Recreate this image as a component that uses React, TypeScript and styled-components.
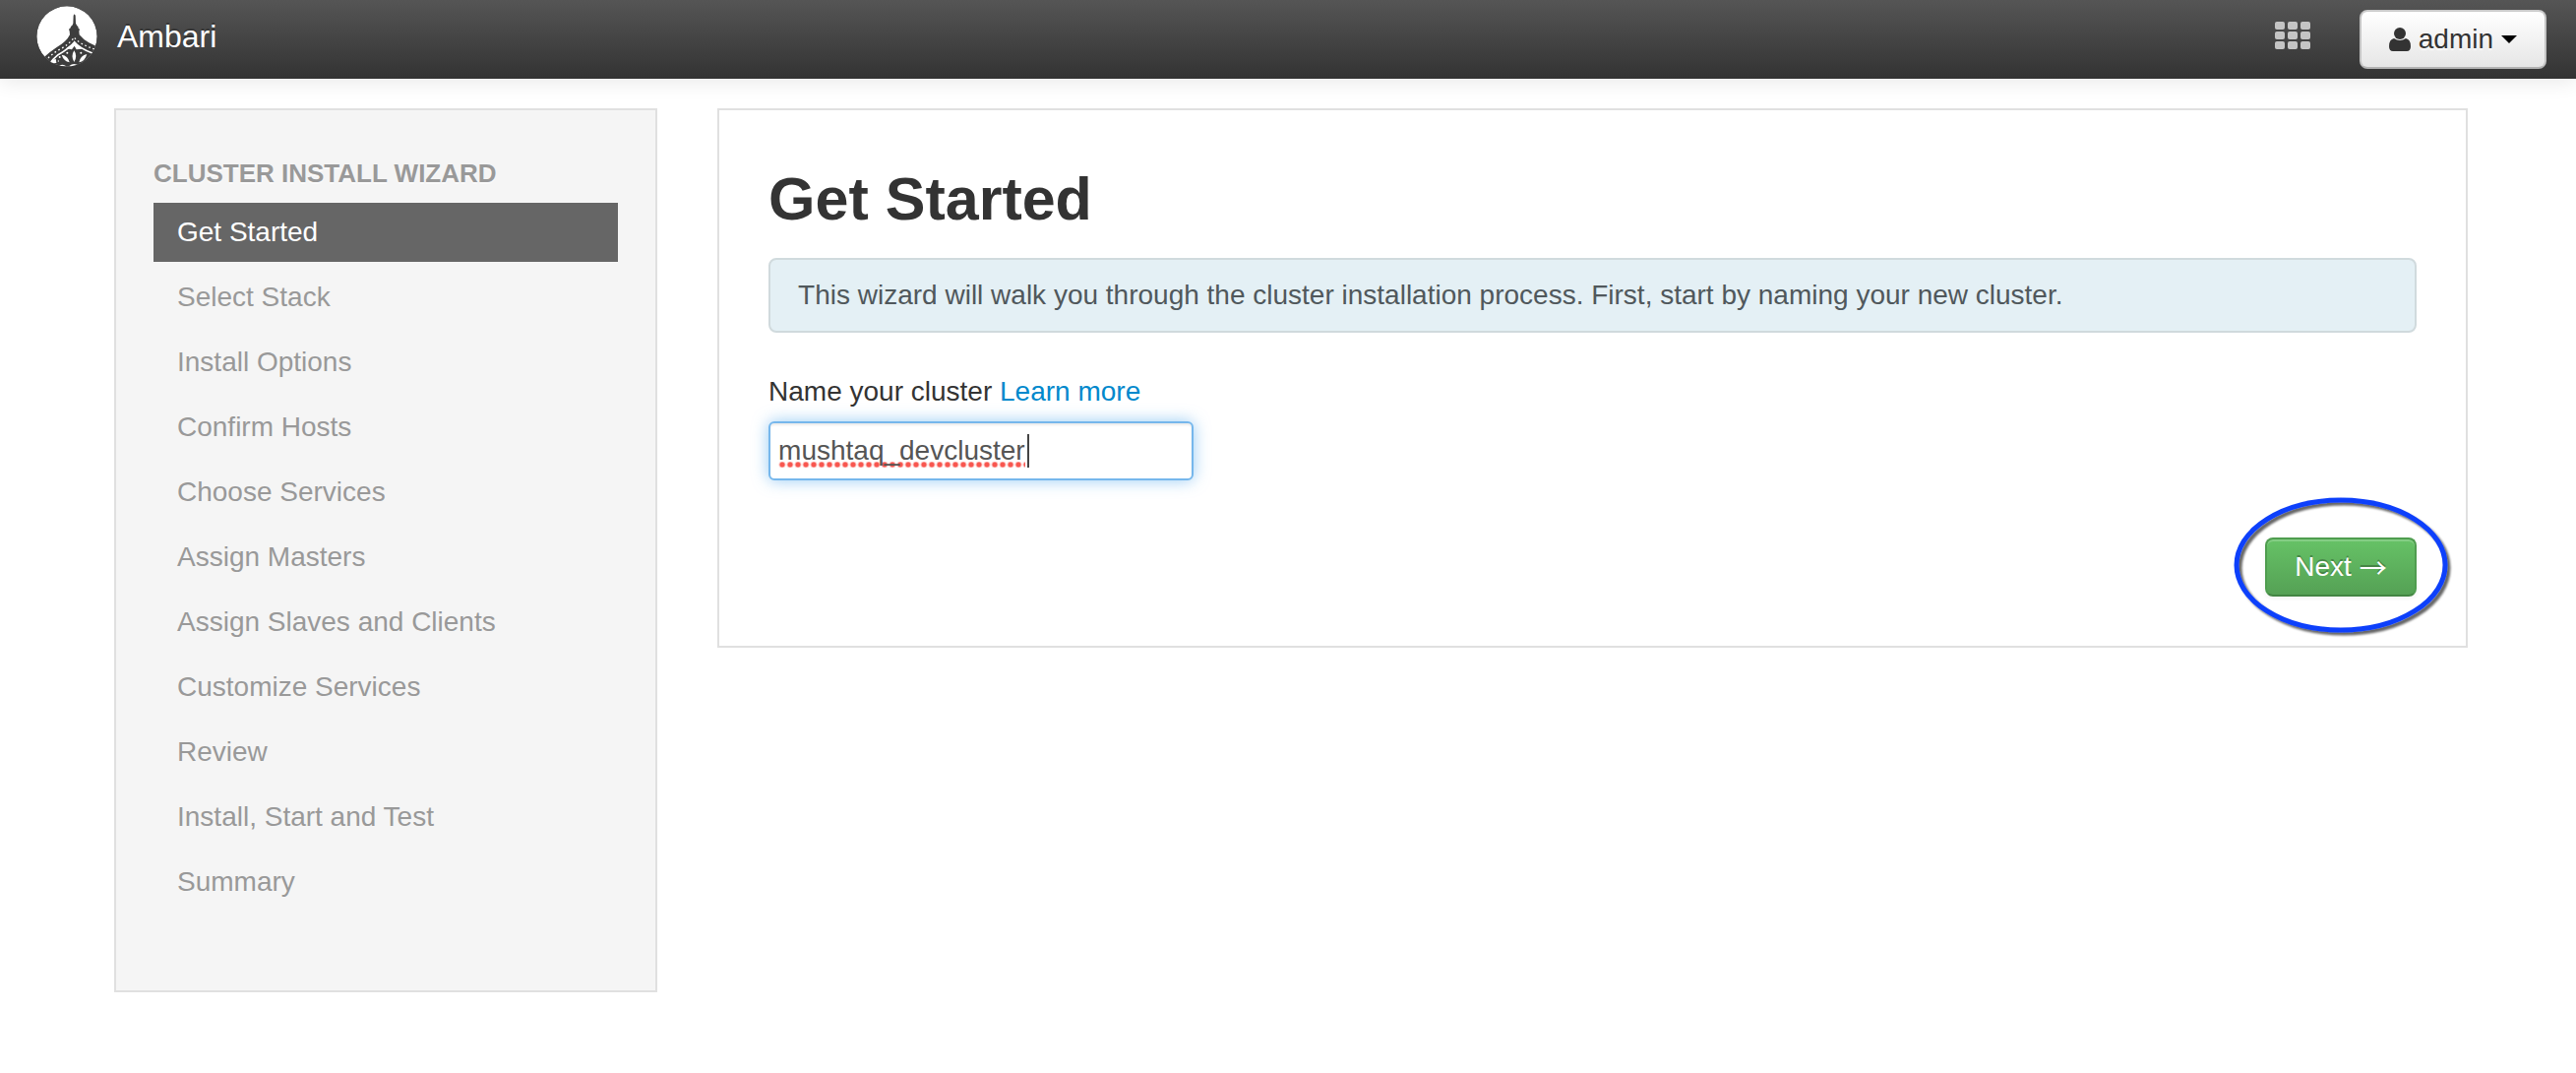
import React, { useState } from "react";
import styled, { createGlobalStyle } from "styled-components";

const GlobalStyle = createGlobalStyle`
  *, *::before, *::after { box-sizing: border-box; }
  body {
    margin: 0;
    background: #fff;
    color: #333;
    font-family: "Liberation Sans", Arial, sans-serif;
    font-size: 28px;
    line-height: 40px;
  }
  a { color: #0088cc; text-decoration: none; }
`;

const Navbar = styled.header`
  display: flex;
  align-items: center;
  height: 80px;
  padding: 0 30px 0 37px;
  background: linear-gradient(#555, #333);
  box-shadow: 0 2px 20px rgba(0, 0, 0, 0.1);
`;

const Brand = styled.a`
  display: flex;
  align-items: center;
  gap: 20px;
  margin-right: auto;
  padding-bottom: 6px;
  color: #fff;
  font-size: 32px;
  text-shadow: 0 -2px 0 rgba(0, 0, 0, 0.25);
`;

const Logo = styled.svg`
  display: block;
  width: 62px;
  height: 62px;
`;

const ViewsButton = styled.button`
  display: flex;
  margin: 0 50px 8px 0;
  padding: 0;
  border: 0;
  background: none;
`;

const UserButton = styled.button`
  display: flex;
  align-items: center;
  gap: 8px;
  height: 60px;
  padding: 0 28px;
  border: 2px solid #bbb;
  border-color: #ccc #c4c4c4 #b3b3b3;
  border-radius: 8px;
  background: linear-gradient(#fff, #e6e6e6);
  color: #333;
  font: inherit;
  text-shadow: 0 2px 2px rgba(255, 255, 255, 0.75);
`;

const Layout = styled.div`
  display: grid;
  grid-template-columns: 9fr 29fr;
  align-items: start;
  gap: 61px;
  padding: 30px 110px 30px 116px;
`;

const Sidebar = styled.nav`
  padding: 44px 38px 80px;
  border: 2px solid #e0e0e0;
  background: #f5f5f5;
`;

const SidebarTitle = styled.h2`
  margin: 0 0 10px;
  color: #999;
  font-size: 26px;
  line-height: 40px;
  text-transform: uppercase;
  text-shadow: 0 2px 0 rgba(255, 255, 255, 0.5);
`;

const Steps = styled.ol`
  display: grid;
  gap: 6px;
  margin: 0;
  padding: 0;
  list-style: none;
`;

const Step = styled.a<{ $active: boolean }>`
  display: block;
  padding: 0 24px;
  background: ${(p) => (p.$active ? "#666" : "transparent")};
  color: ${(p) => (p.$active ? "#fff" : "#999")};
  line-height: 60px;
`;

const Panel = styled.main`
  padding: 50px;
  border: 2px solid #e0e0e0;
`;

const Title = styled.h1`
  margin: 0 0 20px;
  font-size: 61px;
  line-height: 80px;
`;

const Alert = styled.p`
  margin: 0 0 40px;
  padding: 16px 28px;
  border: 2px solid #d0dadd;
  border-radius: 8px;
  background: #e4f0f5;
  color: #50585c;
`;

const FieldLabel = styled.div`
  margin-bottom: 10px;
`;

const TextBox = styled.div`
  display: flex;
  align-items: center;
  width: 432px;
  max-width: 100%;
  height: 60px;
  margin-bottom: 58px;
  padding: 0 8px;
  border: 2px solid #76b7ec;
  border-radius: 6px;
  background: #fff;
  box-shadow: inset 0 2px 2px rgba(0, 0, 0, 0.075), 0 0 16px rgba(82, 168, 236, 0.6);
`;

const NameInput = styled.input`
  field-sizing: content;
  max-width: 100%;
  height: 40px;
  padding: 0;
  border: 0;
  outline: 0;
  background: radial-gradient(circle at 4px 3px, #f8564f 2px, rgba(248, 86, 79, 0.35) 3px, transparent 4px)
    0 31px / 8px 6px repeat-x;
  caret-color: transparent;
  color: #555;
  font: inherit;
`;

const Caret = styled.span`
  width: 2px;
  height: 34px;
  margin-left: 2px;
  background: #444;
`;

const Actions = styled.div`
  display: flex;
  justify-content: flex-end;
`;

const Highlighted = styled.div`
  position: relative;
`;

const NextButton = styled.button`
  display: flex;
  align-items: center;
  justify-content: center;
  gap: 8px;
  min-width: 154px;
  height: 60px;
  padding: 0 24px;
  border: 2px solid #4f9d4f;
  border-bottom-color: #438543;
  border-radius: 8px;
  background: linear-gradient(#66c266, #55a155);
  box-shadow: inset 0 2px 0 rgba(255, 255, 255, 0.2), 0 2px 4px rgba(0, 0, 0, 0.05);
  color: #fff;
  font: inherit;
  text-shadow: 0 -2px 0 rgba(0, 0, 0, 0.25);
`;

const Arrow = styled.span`
  font-family: "Noto Sans CJK SC", sans-serif;
`;

const Ring = styled.svg`
  position: absolute;
  top: -42px;
  left: -34px;
  width: 224px;
  height: 142px;
  pointer-events: none;
  overflow: visible;
`;

const AmbariLogo = () => (
  <Logo viewBox="110 17 186 186" aria-hidden="true">
    <defs>
      <clipPath id="disc">
        <circle cx="203" cy="110" r="92" />
      </clipPath>
    </defs>
    <g clipPath="url(#disc)">
      <circle cx="203" cy="110" r="92" fill="#fff" />
      <path
        fill="#3d3d3d"
        d="M226 42 L229 46 L230 70 Q233 77 237 80 L238 85 L242 88 L240 94 L241 105 Q252 119 270 129 L300 143 L300 210 L130 210 L130 176 Q152 156 172 143 Q202 126 212 105 L211 94 L209 88 L214 84 L215 80 Q221 76 222 70 L223 46 Z"
      />
      <path
        fill="none"
        stroke="#fff"
        strokeWidth="5"
        d="M150 196 Q160 178 176 166 Q212 145 226 127 Q240 145 281 161"
      />
      <path
        fill="none"
        stroke="#fff"
        strokeWidth="4"
        strokeDasharray="5 8"
        d="M146 176 Q164 158 184 148 Q212 132 225 113 Q240 133 290 150"
      />
      <path fill="#fff" d="M226 128 L249 148 L232 150 L226 139 L218 150 L200 147 Z" />
      <g fill="#fff">
        <path d="M225 153 Q236 170 225 188 Q214 170 225 153Z" />
        <path d="M187 166 Q207 169 211 189 Q193 185 187 166Z" />
        <path d="M264 164 Q244 168 240 189 Q258 186 264 164Z" />
        <path d="M154 184 L169 178 L171 191 L160 192Z" />
        <path d="M180 200 Q190 192 201 201Z" />
        <path d="M210 200 Q225 188 239 200 L233 203 Q225 196 216 203Z" />
        <circle cx="181" cy="173" r="3" />
        <circle cx="204" cy="160" r="3" />
        <circle cx="246" cy="160" r="3" />
        <circle cx="177" cy="185" r="2" />
      </g>
    </g>
  </Logo>
);

const GridIcon = () => (
  <svg width="36" height="28" viewBox="0 0 36 28" fill="#c4c4c4" aria-hidden="true">
    {[0, 10, 20].map((y) =>
      [0, 13, 26].map((x) => <rect key={`${x}-${y}`} x={x} y={y} width="10" height="8" rx="2" />)
    )}
  </svg>
);

const UserIcon = () => (
  <svg width="22" height="26" viewBox="0 0 22 26" fill="#333" aria-hidden="true">
    <circle cx="11" cy="7" r="6" />
    <path d="M5 12 Q11 16 17 12 Q22 13 22 20 Q22 25 18 25 L4 25 Q0 25 0 20 Q0 13 5 12Z" />
  </svg>
);

const steps = [
  "Get Started",
  "Select Stack",
  "Install Options",
  "Confirm Hosts",
  "Choose Services",
  "Assign Masters",
  "Assign Slaves and Clients",
  "Customize Services",
  "Review",
  "Install, Start and Test",
  "Summary",
];

export default function App() {
  const [name, setName] = useState("mushtaq_devcluster");
  return (
    <>
      <GlobalStyle />
      <Navbar>
        <Brand href="#">
          <AmbariLogo />
          Ambari
        </Brand>
        <ViewsButton type="button" aria-label="Views">
          <GridIcon />
        </ViewsButton>
        <UserButton type="button">
          <UserIcon />
          admin
          <svg width="16" height="8" viewBox="0 0 16 8" aria-hidden="true">
            <path d="M0 0H16L8 8Z" />
          </svg>
        </UserButton>
      </Navbar>
      <Layout>
        <Sidebar aria-label="Cluster install wizard">
          <SidebarTitle>Cluster Install Wizard</SidebarTitle>
          <Steps>
            {steps.map((step, i) => (
              <li key={step}>
                <Step href="#" $active={i === 0} aria-current={i === 0 ? "step" : undefined}>
                  {step}
                </Step>
              </li>
            ))}
          </Steps>
        </Sidebar>
        <Panel>
          <Title>Get Started</Title>
          <Alert>
            This wizard will walk you through the cluster installation process. First, start by naming your new
            cluster.
          </Alert>
          <FieldLabel>
            <label htmlFor="cluster-name">Name your cluster</label> <a href="#">Learn more</a>
          </FieldLabel>
          <TextBox>
            <NameInput
              id="cluster-name"
              type="text"
              spellCheck={false}
              value={name}
              onChange={(e) => setName(e.target.value)}
            />
            <Caret />
          </TextBox>
          <Actions>
            <Highlighted>
              <NextButton type="button">
                Next <Arrow>→</Arrow>
              </NextButton>
              <Ring viewBox="0 0 224 142" aria-hidden="true">
                <defs>
                  <filter id="ring-shadow" x="-10%" y="-10%" width="120%" height="120%">
                    <feDropShadow dx="3" dy="3" stdDeviation="1" floodColor="#000" floodOpacity="0.6" />
                  </filter>
                </defs>
                <ellipse
                  cx="111"
                  cy="70"
                  rx="106"
                  ry="66"
                  fill="none"
                  stroke="#0f3ffb"
                  strokeWidth="5"
                  filter="url(#ring-shadow)"
                />
              </Ring>
            </Highlighted>
          </Actions>
        </Panel>
      </Layout>
    </>
  );
}
